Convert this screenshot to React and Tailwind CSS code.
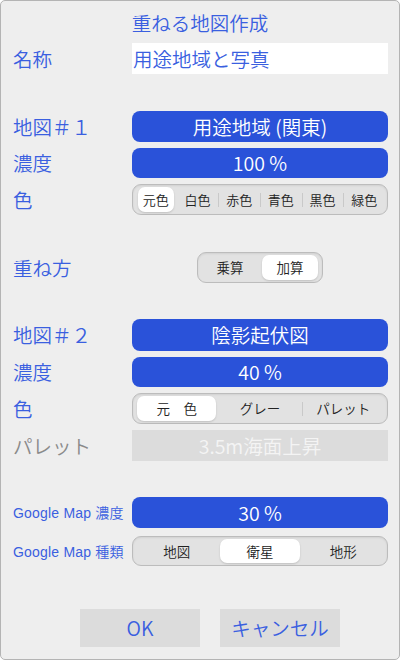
import React from "react";

const FONT = { fontFamily: '"Noto Sans CJK JP", "Noto Sans", sans-serif' };
const GM_FONT = { fontFamily: '"Liberation Sans", "Noto Sans CJK JP", sans-serif' };

function Label({ children, small, gray }) {
  return (
    <div
      style={small ? GM_FONT : undefined}
      className={`w-[131px] shrink-0 pl-[12px] whitespace-nowrap ${
        small ? "text-[14px] tracking-[0.2px] pt-[2px]" : "text-[19.5px]"
      } ${gray ? "text-[#8a8a8a]" : "text-[#3a5fe0]"}`}
    >
      {children}
    </div>
  );
}

function BlueBtn({ children }) {
  return (
    <div className="w-[256px] h-full rounded-[8px] bg-[#2a52d9] text-white text-[19.5px] flex items-center justify-center">
      {children}
    </div>
  );
}

function Segmented({ items, selected, width = "w-[256px]", text = "text-[13.5px]", pillInset = "mx-[2px]" }) {
  return (
    <div
      className={`${width} h-full rounded-[9px] border border-[#bcbcbc] bg-[#e2e2e2] p-[2px] flex shadow-[inset_0_1px_2px_rgba(0,0,0,0.08)]`}
    >
      {items.map((it, i) => {
        const sel = i === selected;
        const showSep = i > 0 && i !== selected && i - 1 !== selected;
        return (
          <div key={i} className="flex-1 relative flex items-center justify-center">
            {showSep && (
              <div className="absolute left-0 top-1/2 -translate-y-1/2 w-px h-[14px] bg-[#c9c9c9]" />
            )}
            {sel ? (
              <div
                className={`${pillInset} self-stretch flex-1 rounded-[7px] bg-white shadow-[0_1px_2px_rgba(0,0,0,0.15)] flex items-center justify-center ${text} text-[#222]`}
              >
                {it}
              </div>
            ) : (
              <span className={`${text} text-[#222]`}>{it}</span>
            )}
          </div>
        );
      })}
    </div>
  );
}

function Row({ children, mt, h = "h-[31px]" }) {
  return <div className={`flex items-center ${h} ${mt}`}>{children}</div>;
}

export default function App() {
  return (
    <div style={FONT} className="w-[400px] h-[660px] overflow-hidden font-[350]">
      <div className="w-[400px] h-[660px] box-border border border-[#b4b4b4] rounded-[5px] bg-[#eeeeee] flex flex-col">
        <div className="pt-[10px] h-[32px] leading-[24px] text-center text-[19.5px] text-[#3a5fe0]">
          重ねる地図作成
        </div>
        <Row mt="mt-[10px]">
          <Label>名称</Label>
          <div className="w-[256px] h-full bg-white flex items-center pl-[1px] text-[19.5px] text-[#3a5fe0]">
            用途地域と写真
          </div>
        </Row>

        <Row mt="mt-[37px]">
          <Label>地図＃１</Label>
          <BlueBtn>用途地域 (関東)</BlueBtn>
        </Row>
        <Row mt="mt-[6px]" h="h-[30px]">
          <Label>濃度</Label>
          <BlueBtn>100 %</BlueBtn>
        </Row>
        <Row mt="mt-[6px]">
          <Label>色</Label>
          <Segmented items={["元色", "白色", "赤色", "青色", "黒色", "緑色"]} selected={0} pillInset="mx-[3px]" text="text-[13px]" />
        </Row>

        <Row mt="mt-[37px]">
          <Label>重ね方</Label>
          <div className="ml-[65px] h-full">
            <Segmented items={["乗算", "加算"]} selected={1} width="w-[126px]" />
          </div>
        </Row>

        <Row mt="mt-[36px]" h="h-[32px]">
          <Label>地図＃２</Label>
          <BlueBtn>陰影起伏図</BlueBtn>
        </Row>
        <Row mt="mt-[6px]" h="h-[30px]">
          <Label>濃度</Label>
          <BlueBtn>40 %</BlueBtn>
        </Row>
        <Row mt="mt-[6px]">
          <Label>色</Label>
          <Segmented items={["元　色", "グレー", "パレット"]} selected={0} />
        </Row>
        <Row mt="mt-[6px]">
          <Label gray>パレット</Label>
          <div className="w-[256px] h-full bg-[#dcdcdc] flex items-center justify-center text-[19.5px] text-[#f4f4f4]">
            3.5m海面上昇
          </div>
        </Row>

        <Row mt="mt-[36px]">
          <Label small>Google Map 濃度</Label>
          <BlueBtn>30 %</BlueBtn>
        </Row>
        <Row mt="mt-[8px]" h="h-[30px]">
          <Label small>Google Map 種類</Label>
          <Segmented items={["地図", "衛星", "地形"]} selected={1} />
        </Row>

        <div className="mt-[43px] flex pl-[79px] gap-[20px]">
          <div className="w-[120px] h-[38px] bg-[#dcdcdc] flex items-center justify-center text-[19.5px] text-[#3a5fe0]">
            OK
          </div>
          <div className="w-[120px] h-[38px] bg-[#dcdcdc] flex items-center justify-center text-[19.5px] text-[#3a5fe0]">
            キャンセル
          </div>
        </div>
      </div>
    </div>
  );
}
